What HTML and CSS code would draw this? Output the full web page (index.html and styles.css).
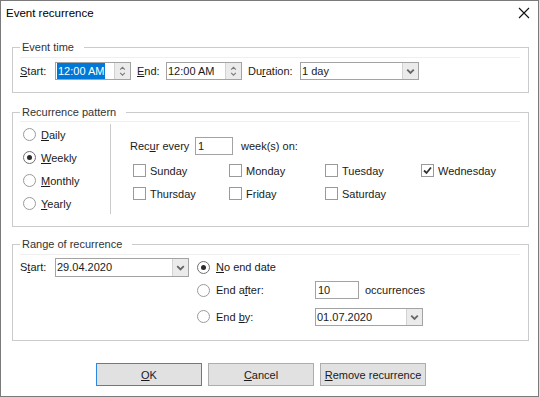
FILE: index.html
```html
<!DOCTYPE html>
<html lang="en">
<head>
  <meta charset="UTF-8" />
  <title>Event recurrence</title>
  <link rel="stylesheet" href="styles.css">
</head>
<body>
  <div class="dialog">
    <div class="titlebar">
      <span class="title">Event recurrence</span>
      <svg class="close" width="12" height="12" viewBox="0 0 12 12">
        <path d="M1 1 L11 11 M11 1 L1 11" stroke="#111" stroke-width="1.1" fill="none" />
      </svg>
    </div>

    <div class="content">
      <!-- Event time -->
      <fieldset class="group group-time">
        <legend>Event time</legend>
        <div class="group-body time-row">
          <span class="lbl lbl-start"><u>S</u>tart:</span>
          <div class="spin-edit">
            <span class="value"><span class="sel">12:00 AM</span></span>
            <span class="spin">
              <svg width="16" height="16" viewBox="0 0 16 16">
                <polyline points="5.5,6.5 8,4 10.5,6.5" stroke="#7a7a7a" stroke-width="1.2" fill="none" />
                <polyline points="5.5,10 8,12.5 10.5,10" stroke="#7a7a7a" stroke-width="1.2" fill="none" />
              </svg>
            </span>
          </div>
          <span class="lbl lbl-end"><u>E</u>nd:</span>
          <div class="spin-edit">
            <span class="value">12:00 AM</span>
            <span class="spin">
              <svg width="16" height="16" viewBox="0 0 16 16">
                <polyline points="5.5,6.5 8,4 10.5,6.5" stroke="#7a7a7a" stroke-width="1.2" fill="none" />
                <polyline points="5.5,10 8,12.5 10.5,10" stroke="#7a7a7a" stroke-width="1.2" fill="none" />
              </svg>
            </span>
          </div>
          <span class="lbl lbl-duration">Du<u>r</u>ation:</span>
          <div class="combo combo-duration">
            <span class="value">1 day</span>
            <span class="drop">
              <svg width="16" height="16" viewBox="0 0 16 16">
                <polyline points="4.5,6.5 8,10 11.5,6.5" stroke="#666" stroke-width="2" fill="none" />
              </svg>
            </span>
          </div>
        </div>
      </fieldset>

      <!-- Recurrence pattern -->
      <fieldset class="group group-pattern">
        <legend>Recurrence pattern</legend>
        <div class="group-body pattern">
          <div class="kinds">
            <div class="radio-row"><span class="radio"></span><span><u>D</u>aily</span></div>
            <div class="radio-row"><span class="radio checked"></span><span><u>W</u>eekly</span></div>
            <div class="radio-row"><span class="radio"></span><span><u>M</u>onthly</span></div>
            <div class="radio-row"><span class="radio"></span><span><u>Y</u>early</span></div>
          </div>
          <div class="separator"></div>
          <div class="weekly">
            <div class="recur-row">
              <span class="lbl lbl-recur">Rec<u>u</u>r every</span>
              <span class="edit edit-weeks">1</span>
              <span class="weeks-on">week(s) on:</span>
            </div>
            <div class="days">
              <div class="check-row"><span class="check"></span><span>Sunday</span></div>
              <div class="check-row"><span class="check"></span><span>Monday</span></div>
              <div class="check-row"><span class="check"></span><span>Tuesday</span></div>
              <div class="check-row">
                <span class="check">
                  <svg width="11" height="11" viewBox="0 0 11 11">
                    <polyline points="2,5.5 4.5,8 9,2.5" stroke="#333" stroke-width="1.8" fill="none" />
                  </svg>
                </span>
                <span>Wednesday</span>
              </div>
              <div class="check-row"><span class="check"></span><span>Thursday</span></div>
              <div class="check-row"><span class="check"></span><span>Friday</span></div>
              <div class="check-row"><span class="check"></span><span>Saturday</span></div>
            </div>
          </div>
        </div>
      </fieldset>

      <!-- Range of recurrence -->
      <fieldset class="group group-range">
        <legend>Range of recurrence</legend>
        <div class="group-body range">
          <span class="lbl">S<u>t</u>art:</span>
          <div class="combo combo-start">
            <span class="value">29.04.2020</span>
            <span class="drop">
              <svg width="16" height="17" viewBox="0 0 16 17">
                <polyline points="4.5,7 8,10.5 11.5,7" stroke="#666" stroke-width="2" fill="none" />
              </svg>
            </span>
          </div>
          <div class="radio-row range-radio"><span class="radio checked"></span><span><u>N</u>o end date</span></div>
          <span></span>

          <span></span>
          <span></span>
          <div class="radio-row range-radio"><span class="radio"></span><span>End a<u>f</u>ter:</span></div>
          <div class="occ">
            <span class="edit edit-occ">10</span>
            <span class="occ-lbl">occurrences</span>
          </div>

          <span></span>
          <span></span>
          <div class="radio-row range-radio"><span class="radio"></span><span>End <u>b</u>y:</span></div>
          <div class="combo combo-end">
            <span class="value">01.07.2020</span>
            <span class="drop">
              <svg width="16" height="16" viewBox="0 0 16 16">
                <polyline points="4.5,6.5 8,10 11.5,6.5" stroke="#666" stroke-width="2" fill="none" />
              </svg>
            </span>
          </div>
        </div>
      </fieldset>

      <div class="buttons">
        <button class="btn btn-ok"><u>O</u>K</button>
        <button class="btn"><u>C</u>ancel</button>
        <button class="btn"><u>R</u>emove recurrence</button>
      </div>
    </div>
  </div>
</body>
</html>
```

FILE: styles.css
```css
html, body {
  margin: 0;
  padding: 0;
}
*, *::before, *::after {
  box-sizing: border-box;
}
body {
  background: #dde3ea;
  font-family: 'Liberation Sans', Arial, sans-serif;
  font-size: 11px;
  color: #1a1a1a;
}

.dialog {
  width: 539px;
  height: 397px;
  background: #fff;
  border: 1px solid #7a7a7a;
}

.titlebar {
  height: 24px;
  display: flex;
  align-items: center;
  justify-content: space-between;
  padding: 0 8px 0 5px;
}

.title {
  font-size: 11.5px;
  color: #000;
}

.content {
  padding: 15px 9px 0 11px;
}

/* group boxes */
.group {
  margin: 0;
  padding: 0 8px 12px 7px;
  border: 1px solid #cbcbcb;
  min-width: 0;
}

.group legend {
  padding: 0 10px 0 2px;
  line-height: 14px;
  color: #333;
}

.group-body {
  border-top: 1px solid #efefef;
  margin-top: 3px;
}

.group-pattern {
  margin-top: 12px;
  padding-bottom: 11px;
}
.group-pattern .group-body {
  margin-top: 2px;
}

.group-range {
  margin-top: 10px;
  padding-bottom: 8px;
}

/* event time row */
.time-row {
  display: flex;
  align-items: center;
  padding-top: 4px;
}

.lbl {
  white-space: nowrap;
}
.lbl-start { width: 35px; }
.lbl-end { width: 29px; margin-left: 6px; }
.lbl-duration { width: 52px; margin-left: 6px; }

.spin-edit,
.combo {
  display: flex;
  height: 18px;
  border: 1px solid #a3a3a3;
  background: #fff;
}
.spin-edit {
  width: 76px;
}
.spin-edit .value,
.combo .value {
  flex: 1;
  display: flex;
  align-items: center;
  padding-left: 1px;
  white-space: nowrap;
}
.spin-edit .sel {
  background: #0078d7;
  color: #fff;
  height: 16px;
  line-height: 16px;
  padding: 0 1px;
}
.spin,
.drop {
  width: 16px;
  background: #ebebeb;
  border-left: 1px solid #d2d2d2;
  display: flex;
  align-items: center;
  justify-content: center;
}
.spin svg,
.drop svg {
  display: block;
}

.combo-duration { width: 119px; }

/* recurrence pattern */
.pattern {
  display: flex;
  align-items: flex-start;
}

.kinds {
  width: 90px;
  padding-top: 1px;
  padding-left: 3px;
}

.radio-row {
  height: 23px;
  display: flex;
  align-items: center;
  gap: 5px;
  white-space: nowrap;
}

.radio {
  width: 13px;
  height: 13px;
  border: 1px solid #9a9a9a;
  border-radius: 50%;
  background: #fff;
  display: flex;
  align-items: center;
  justify-content: center;
  flex: none;
}
.radio.checked {
  border-color: #6f6f6f;
}
.radio.checked::after {
  content: "";
  width: 5px;
  height: 5px;
  border-radius: 50%;
  background: #2b2b2b;
}

.separator {
  width: 1px;
  height: 90px;
  margin-top: 2px;
  background: #cbcbcb;
}

.weekly {
  margin-left: 19px;
  padding-top: 15px;
}

.recur-row {
  display: flex;
  align-items: center;
  height: 18px;
}
.lbl-recur { width: 65px; }

.edit {
  height: 18px;
  border: 1px solid #a3a3a3;
  display: flex;
  align-items: center;
  padding-left: 2px;
}
.edit-weeks { width: 38px; }
.weeks-on { margin-left: 8px; }

.days {
  display: grid;
  grid-template-columns: repeat(4, 96px);
  grid-auto-rows: 23px;
  margin-top: 4px;
  margin-left: 3px;
}

.check-row {
  display: flex;
  align-items: center;
  gap: 4px;
  white-space: nowrap;
}

.check {
  width: 13px;
  height: 13px;
  border: 1px solid #9a9a9a;
  background: #fff;
  display: flex;
  align-items: center;
  justify-content: center;
  flex: none;
}
.check svg {
  display: block;
}

/* range */
.range {
  display: grid;
  grid-template-columns: 35px 134px 126px auto;
  grid-template-rows: 24px 22px 31px;
  align-items: center;
}

.combo-start {
  height: 19px;
}
.combo-end {
  width: 108px;
}

.range-radio {
  padding-left: 8px;
  gap: 6px;
  height: auto;
}

.occ {
  display: flex;
  align-items: center;
}
.edit-occ { width: 44px; }
.occ-lbl { margin-left: 6px; }

/* buttons */
.buttons {
  display: flex;
  gap: 6px;
  margin-top: 22px;
  padding-left: 84px;
}

.btn {
  width: 106px;
  height: 23px;
  background: #e1e1e1;
  border: 1px solid #adadad;
  font-family: inherit;
  font-size: 11px;
  color: #1a1a1a;
  padding: 0;
}
.btn-ok {
  border-color: #2f88e0;
}
```
